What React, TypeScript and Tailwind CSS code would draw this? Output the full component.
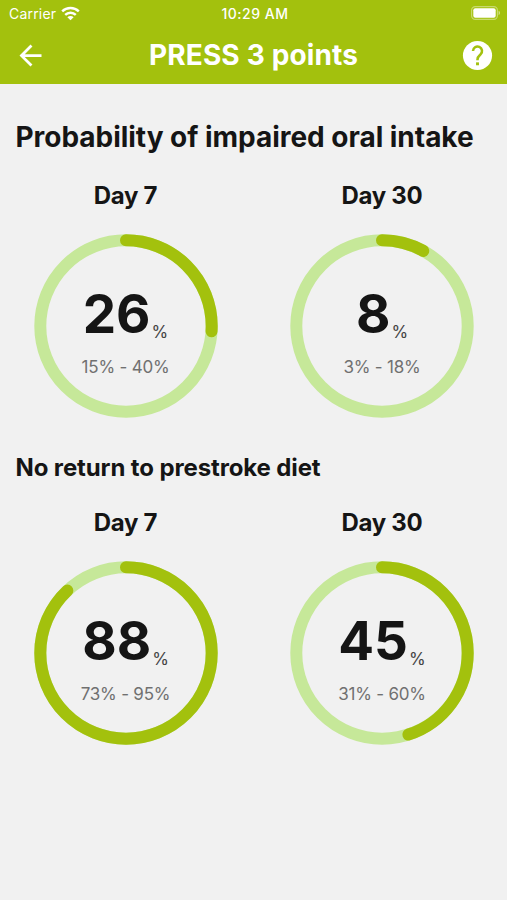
interface Estimate {
  day: string
  value: number
  range: string
}

const oralIntake: Estimate[] = [
  { day: 'Day 7', value: 26, range: '15% - 40%' },
  { day: 'Day 30', value: 8, range: '3% - 18%' },
]

const prestrokeDiet: Estimate[] = [
  { day: 'Day 7', value: 88, range: '73% - 95%' },
  { day: 'Day 30', value: 45, range: '31% - 60%' },
]

const RADIUS = 85.7

function StatusBar() {
  return (
    <div className="grid h-[27px] grid-cols-3 items-center pl-[9px] pr-[6px] text-[14px] leading-none">
      <div className="flex items-center gap-[5px]">
        <span className="tracking-[0.2px]">Carrier</span>
        <svg className="-mt-px" width="19" height="15" viewBox="0 0 19 15" fill="none" stroke="white" strokeWidth="2.4">
          <path d="M1.2 5.4a11.8 11.8 0 0 1 16.6 0" />
          <path d="M4.2 8.9a7.5 7.5 0 0 1 10.6 0" />
          <path d="M9.5 14.3 6.4 11.3a4.4 4.4 0 0 1 6.2 0z" fill="white" stroke="none" />
        </svg>
      </div>
      <span className="text-center font-medium tracking-[0.5px]">10:29 AM</span>
      <svg className="-mt-px justify-self-end" width="30" height="14" viewBox="0 0 30 14">
        <rect x="0.6" y="0.6" width="25.8" height="12.8" rx="3.6" fill="none" stroke="white" strokeOpacity="0.4" strokeWidth="1.2" />
        <rect x="2.3" y="2.3" width="22.4" height="9.4" rx="2" fill="white" />
        <path d="M27.6 4.8v4.4a2.4 2.4 0 0 0 0-4.4z" fill="white" fillOpacity="0.5" />
      </svg>
    </div>
  )
}

function Header() {
  return (
    <header className="h-[84px] bg-[#a3c10d] text-white">
      <StatusBar />
      <div className="flex h-[56px] items-center justify-between pl-[14px] pr-[12px]">
        <button aria-label="Back">
          <svg width="33" height="33" viewBox="0 0 24 24" fill="white">
            <path d="M20 11H7.83l5.59-5.59L12 4l-8 8 8 8 1.41-1.41L7.83 13H20v-2z" />
          </svg>
        </button>
        <h1 className="text-[28px] font-bold leading-none tracking-[0.15px]">PRESS 3 points</h1>
        <button aria-label="Help">
          <svg width="35" height="35" viewBox="0 0 24 24" fill="none">
            <circle cx="12" cy="12" r="10" fill="white" />
            <path
              d="M8.9 8.9a3.1 3.1 0 1 1 5.2 2.3c-1.1 1-2.1 1.7-2.1 3.6v.5"
              stroke="#a3c10d"
              strokeWidth="1.75"
            />
            <rect x="11" y="16.7" width="2" height="2" fill="#a3c10d" />
          </svg>
        </button>
      </div>
    </header>
  )
}

function Gauge({ day, value, range }: Estimate) {
  return (
    <div className="flex flex-col items-center">
      <h3 className="pt-px text-[24px] font-[650] leading-[30px] tracking-[-0.3px]">{day}</h3>
      <div className="mt-[23px] grid size-[184px] place-items-center">
        <svg className="col-start-1 row-start-1" width="184" height="184" viewBox="0 0 184 184" fill="none" strokeWidth="12">
          <circle cx="92" cy="92" r={RADIUS} stroke="#c6e899" />
          <circle
            cx="92"
            cy="92"
            r={RADIUS}
            stroke="#a3c10d"
            strokeLinecap="round"
            pathLength="100"
            strokeDasharray={`${value} 100`}
            transform="rotate(-90 92 92)"
          />
        </svg>
        <div className="col-start-1 row-start-1 flex flex-col items-center pt-[10px]">
          <div className="flex items-baseline">
            <span className="text-[53px] font-bold leading-[60px]">{value}</span>
            <span className="relative top-[5px] ml-[1px] text-[17px] leading-none text-[#444]">%</span>
          </div>
          <p className="mt-[11px] text-[17px] leading-[24px] tracking-[-0.2px] text-[#707070]">{range}</p>
        </div>
      </div>
    </div>
  )
}

function GaugeRow({ items }: { items: Estimate[] }) {
  return (
    <div className="grid grid-cols-[257px_256px] -ml-[3px]">
      {items.map((item) => (
        <Gauge key={item.day} {...item} />
      ))}
    </div>
  )
}

export default function App() {
  return (
    <div className="h-[900px] w-[507px] overflow-hidden bg-[#f1f1f1] font-['Inter',sans-serif] text-[#151515]">
      <Header />
      <main>
        <h2 className="mt-[35px] whitespace-nowrap pl-[15.5px] text-[28px] font-[650] leading-[36px] tracking-[-0.03px]">
          Probability of impaired oral intake
        </h2>
        <div className="mt-[25px]">
          <GaugeRow items={oralIntake} />
        </div>
        <h2 className="mt-[34px] pl-[15.5px] pt-px text-[24px] font-[650] leading-[30px] tracking-[-0.12px]">
          No return to prestroke diet
        </h2>
        <div className="mt-[24px]">
          <GaugeRow items={prestrokeDiet} />
        </div>
      </main>
    </div>
  )
}
